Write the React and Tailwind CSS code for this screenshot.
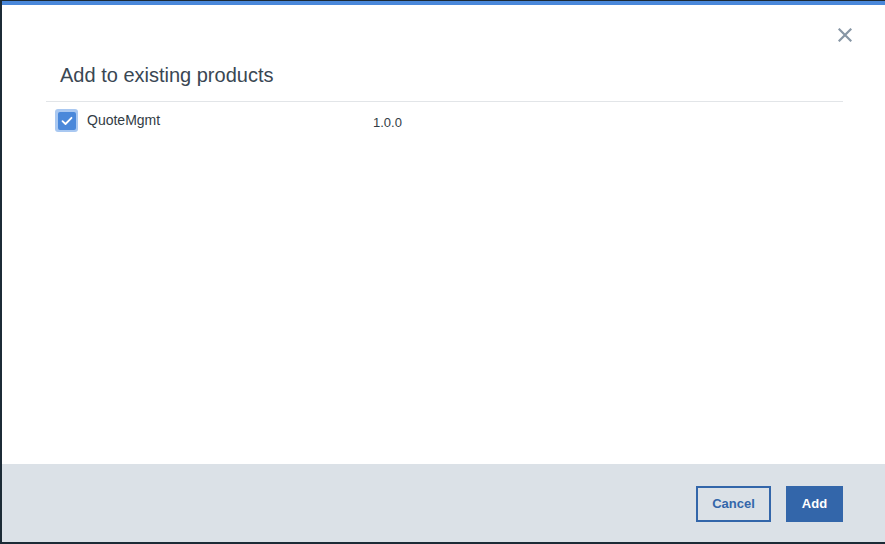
import React, { useState } from "react";

export default function App() {
    const [checked, setChecked] = useState(true);

    return (
        <div
            className="w-[885px] h-[544px] bg-[#1c2b36] pl-[2px] pt-[1px] pb-[2px] overflow-hidden"
            style={{ fontFamily: '"Helvetica Neue", "Liberation Sans", Arial, sans-serif' }}
        >
            <div className="h-full flex flex-col bg-white border-t-[4px] border-[#4a88da]">
                {/* header */}
                <div className="relative h-[96px] shrink-0">
                    <button className="absolute right-[32px] top-[22px] w-[16px] h-[16px] flex items-center justify-center text-[#8796a5]">
                        <svg width="14" height="14" viewBox="0 0 14 14">
                            <path d="M1.5 1.5 L12.5 12.5 M12.5 1.5 L1.5 12.5" stroke="currentColor" strokeWidth="2.2" strokeLinecap="square" />
                        </svg>
                    </button>
                    <h2 className="absolute left-[58px] top-[56px] text-[20px] leading-[28px] text-[#3a4753]">
                        Add to existing products
                    </h2>
                </div>

                {/* body */}
                <div className="flex-1 pl-[44px] pr-[42px]">
                    <div className="border-t border-[#e2e5e8] pt-[7px] flex items-center">
                        <button
                            onClick={() => setChecked(!checked)}
                            className="ml-[9px] w-[23px] h-[23px] rounded-[3px] bg-[#a9c8f1] flex items-center justify-center"
                        >
                            <span className="w-[18px] h-[18px] rounded-[2px] bg-[#4a88da] flex items-center justify-center">
                                {checked && (
                                    <svg width="12" height="10" viewBox="0 0 12 10">
                                        <path d="M1.5 5.2 L4.5 8 L10.5 1.8" fill="none" stroke="white" strokeWidth="1.8" strokeLinecap="round" strokeLinejoin="round" />
                                    </svg>
                                )}
                            </span>
                        </button>
                        <span className="ml-[9px] w-[286px] text-[14px] text-[#323c45] -mt-[1px]">QuoteMgmt</span>
                        <span className="text-[13px] text-[#323c45] mt-[4px]">1.0.0</span>
                    </div>
                </div>

                {/* footer */}
                <div className="h-[78px] shrink-0 bg-[#dbe1e7] flex items-center justify-end gap-[15px] pr-[42px] pt-[1px]">
                    <button className="w-[75px] h-[36px] border-2 border-[#3366aa] text-[#3366aa] text-[13px] font-bold">
                        Cancel
                    </button>
                    <button className="w-[57px] h-[36px] bg-[#3366aa] text-white text-[13px] font-bold">
                        Add
                    </button>
                </div>
            </div>
        </div>
    );
}
